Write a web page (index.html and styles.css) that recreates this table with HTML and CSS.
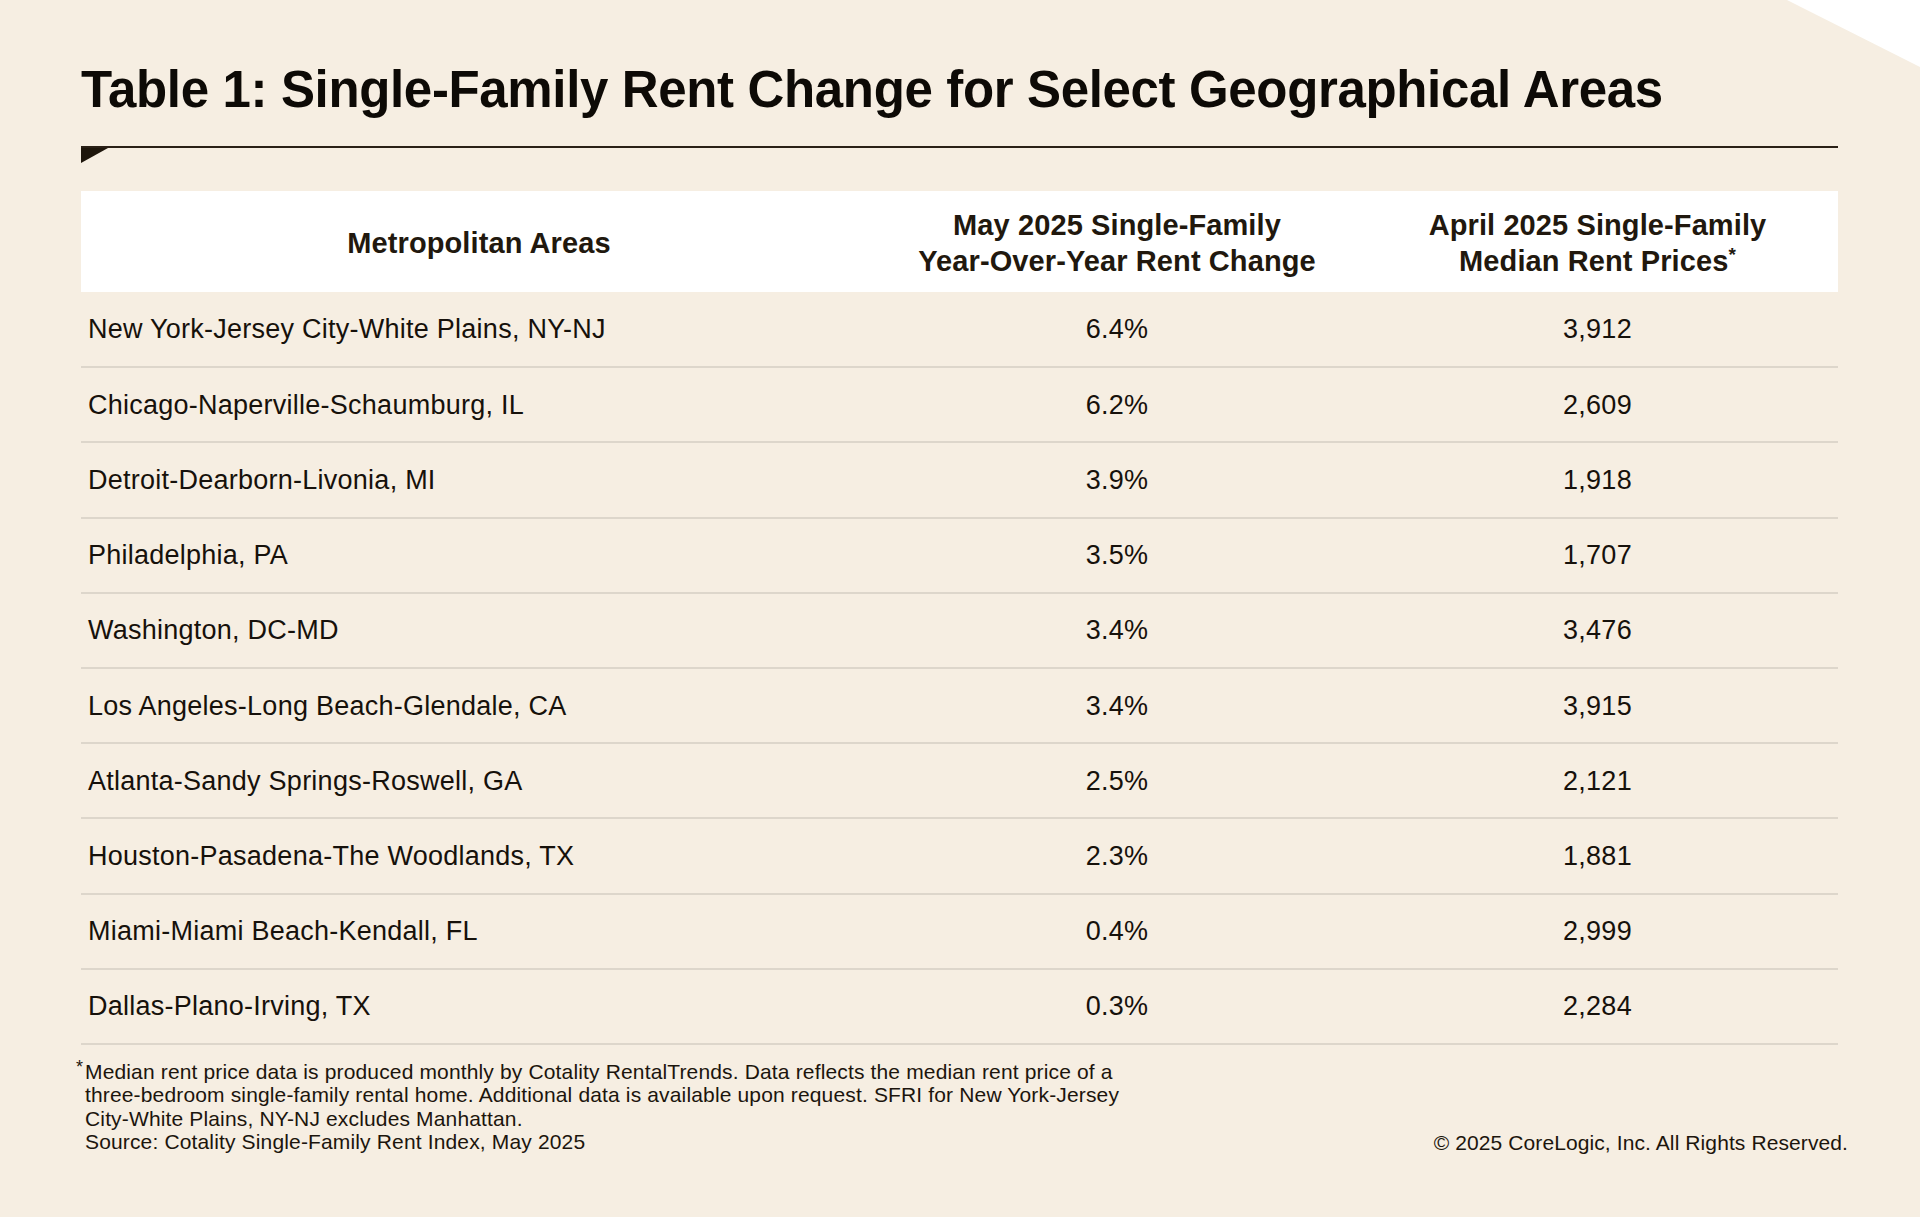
FILE: index.html
```html
<!DOCTYPE html>
<html lang="en">
<head>
<meta charset="utf-8">
<title>Table 1: Single-Family Rent Change for Select Geographical Areas</title>
<link rel="stylesheet" href="styles.css">
</head>
<body>
<div class="corner"></div>
<main class="page">
  <h1 class="title">Table 1: Single-Family Rent Change for Select Geographical Areas</h1>
  <div class="rule"></div>
  <svg class="rule-tab" width="27" height="15" viewBox="0 0 27 15"><polygon points="0,0 27,0 0,15" fill="#1e160c"/></svg>
  <table class="data">
    <colgroup>
      <col class="c1"><col class="c2"><col class="c3">
    </colgroup>
    <thead>
      <tr>
        <th>Metropolitan Areas</th>
        <th>May 2025 Single-Family<br>Year-Over-Year Rent Change</th>
        <th>April 2025 Single-Family<br>Median Rent Prices<sup>*</sup></th>
      </tr>
    </thead>
    <tbody>
      <tr><td>New York-Jersey City-White Plains, NY-NJ</td><td>6.4%</td><td>3,912</td></tr>
      <tr><td>Chicago-Naperville-Schaumburg, IL</td><td>6.2%</td><td>2,609</td></tr>
      <tr><td>Detroit-Dearborn-Livonia, MI</td><td>3.9%</td><td>1,918</td></tr>
      <tr><td>Philadelphia, PA</td><td>3.5%</td><td>1,707</td></tr>
      <tr><td>Washington, DC-MD</td><td>3.4%</td><td>3,476</td></tr>
      <tr><td>Los Angeles-Long Beach-Glendale, CA</td><td>3.4%</td><td>3,915</td></tr>
      <tr><td>Atlanta-Sandy Springs-Roswell, GA</td><td>2.5%</td><td>2,121</td></tr>
      <tr><td>Houston-Pasadena-The Woodlands, TX</td><td>2.3%</td><td>1,881</td></tr>
      <tr><td>Miami-Miami Beach-Kendall, FL</td><td>0.4%</td><td>2,999</td></tr>
      <tr><td>Dallas-Plano-Irving, TX</td><td>0.3%</td><td>2,284</td></tr>
    </tbody>
  </table>
  <footer class="foot">
    <div class="notes">
      <p><sup class="mark">*</sup>Median rent price data is produced monthly by Cotality RentalTrends. Data reflects the median rent price of a<br>three-bedroom single-family rental home. Additional data is available upon request. SFRI for New York-Jersey<br>City-White Plains, NY-NJ excludes Manhattan.<br>Source: Cotality Single-Family Rent Index, May 2025</p>
    </div>
    <div class="copy">© 2025 CoreLogic, Inc. All Rights Reserved.</div>
  </footer>
</main>
</body>
</html>
```
FILE: styles.css
```css
html, body {
  margin: 0;
  padding: 0;
}
body {
  background: #f6eee2;
  color: #1c150d;
  font-family: "Liberation Sans", Arial, sans-serif;
  width: 1920px;
  height: 1217px;
  overflow: hidden;
  position: relative;
}
.corner {
  position: absolute;
  top: 0;
  right: 0;
  width: 133px;
  height: 67px;
  background: #ffffff;
  clip-path: polygon(0 0, 100% 0, 100% 100%);
}
.page {
  width: 1757px;
  padding-left: 81px;
  padding-top: 64px;
}
.title {
  margin: 0;
  font-size: 51px;
  line-height: 51px;
  font-weight: 700;
  letter-spacing: -0.35px;
  color: #0d0a06;
}
.rule {
  margin-top: 31px;
  height: 2px;
  background: #2a2016;
}
.rule-tab {
  display: block;
}
.data {
  margin-top: 28px;
  width: 1757px;
  border-collapse: collapse;
  table-layout: fixed;
}
.c1 { width: 796px; }
.c2 { width: 480px; }
.c3 { width: 481px; }
.data thead tr {
  background: #ffffff;
  height: 101px;
}
.data th {
  font-size: 29px;
  line-height: 36px;
  font-weight: 700;
  letter-spacing: 0.1px;
  color: #21180e;
  text-align: center;
  vertical-align: middle;
  padding: 3px 0 0 0;
}
.data th sup {
  font-size: 19px;
  line-height: 0;
  vertical-align: 10px;
}
.data tbody tr {
  height: 75.2px;
  border-bottom: 2px solid #ddd6cb;
}
.data td {
  font-size: 27px;
  line-height: 30px;
  letter-spacing: 0.25px;
  text-align: center;
  vertical-align: middle;
  padding: 0;
  color: #16110b;
}
.data td:first-child {
  text-align: left;
  padding-left: 7px;
}
.foot {
  display: flex;
  justify-content: space-between;
  align-items: flex-end;
  margin-top: 15px;
  width: 1771px;
  margin-left: -4px;
}
.notes p {
  margin: 0;
  font-size: 21px;
  line-height: 23.4px;
  letter-spacing: 0.15px;
  padding-left: 8px;
  color: #1c150d;
}
.mark {
  display: inline-block;
  width: 9px;
  margin-left: -9px;
  font-size: 18px;
  line-height: 0;
  vertical-align: 6px;
}
.copy {
  font-size: 21px;
  line-height: 23px;
  letter-spacing: 0.1px;
  color: #1c150d;
}
```
